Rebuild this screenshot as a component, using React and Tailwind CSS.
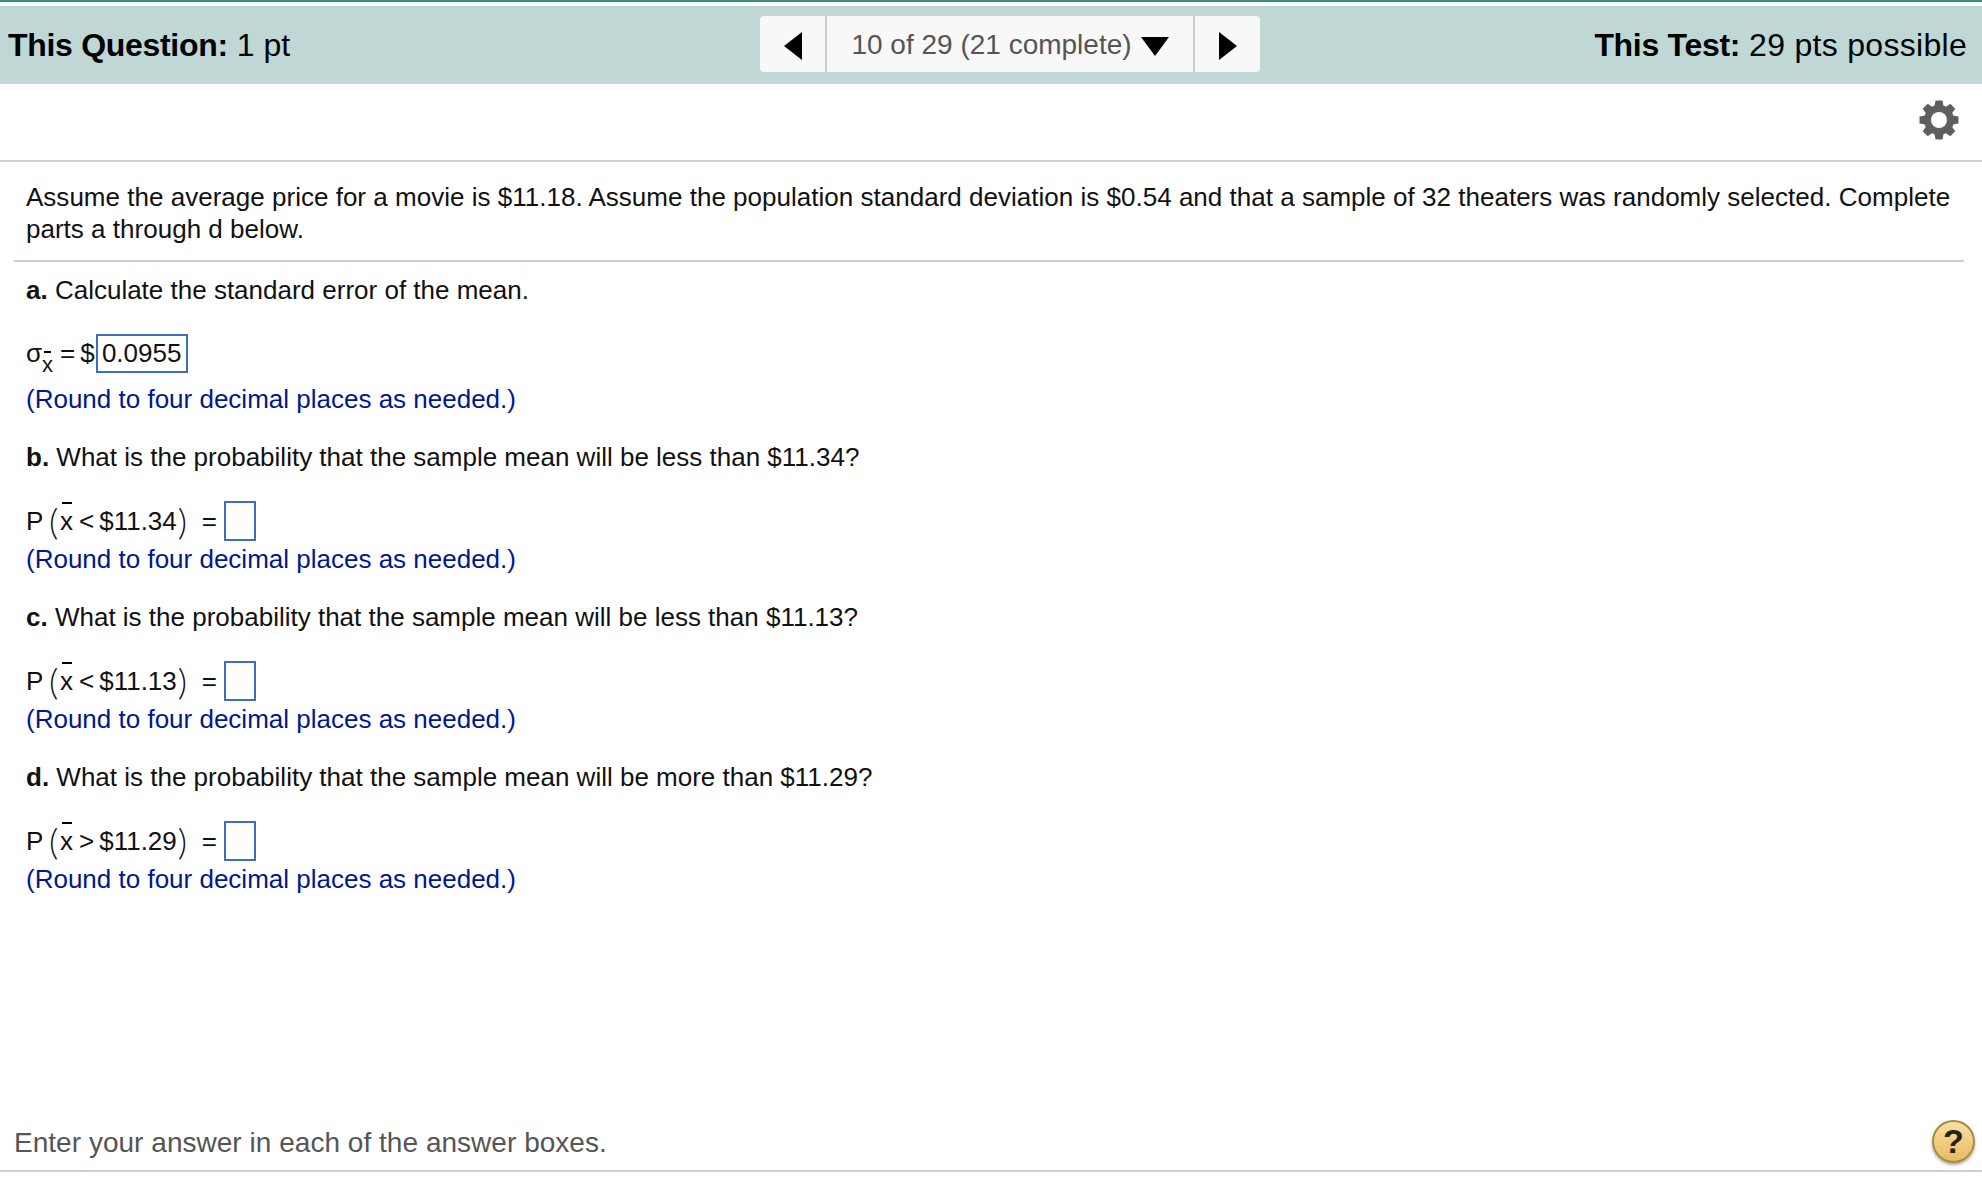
import React from "react";

const rows = [
  { label: "b.", q: "What is the probability that the sample mean will be less than $11.34?", op: "<", val: "$11.34" },
  { label: "c.", q: "What is the probability that the sample mean will be less than $11.13?", op: "<", val: "$11.13" },
  { label: "d.", q: "What is the probability that the sample mean will be more than $11.29?", op: ">", val: "$11.29" },
];

const RoundNote = ({ className = "" }) => (
  <div className={`leading-[32px] text-[#00188f] ${className}`}>(Round to four decimal places as needed.)</div>
);

const Gear = () => (
  <svg viewBox="0 0 40 40" className="h-[40px] w-[40px]">
    <g fill="#5f5f5f">
      {[0, 45, 90, 135, 180, 225, 270, 315].map((a) => (
        <path key={a} d="M15.5 6 L16.5 0.5 H23.5 L24.5 6 Z" transform={`rotate(${a} 20 20)`} />
      ))}
      <circle cx="20" cy="20" r="15" />
    </g>
    <circle cx="20" cy="20" r="8" fill="#fff" />
  </svg>
);

function ProbRow({ op, val }) {
  return (
    <div className="mt-[28px] flex h-[40px] items-center">
      <span className="w-[17px]">P</span>
      <span className="ml-[6px] w-[11px] font-['Lato',sans-serif] text-[36px] font-light leading-none">(</span>
      <span className="relative w-[13px]">
        x
        <span className="absolute left-[2px] top-0 h-[2px] w-[10px] bg-black" />
      </span>
      <span className="ml-[6px]">{op}</span>
      <span className="ml-[5px]">{val}</span>
      <span className="ml-[1px] w-[11px] font-['Lato',sans-serif] text-[36px] font-light leading-none">)</span>
      <span className="ml-[13px]">=</span>
      <span className="ml-[7px] h-[40px] w-[32px] border-2 border-[#3f6cc4]" />
    </div>
  );
}

export default function App() {
  return (
    <div className="flex h-[1180px] flex-col overflow-hidden bg-white font-['Liberation_Sans',Arial,sans-serif] text-[26px] text-[#111]">
      <div className="h-[2px] bg-[#3f8c80]" />
      <div className="h-[4px] bg-white" />

      <div className="grid h-[78px] grid-cols-[752px_500px_1fr] items-center border-b-2 border-[#cdd1dc] bg-[#bfd8d5] pl-[8px] pr-[15px] text-[32px] text-black">
        <div className="pt-px">
          <b className="tracking-[-0.3px]">This Question:</b> 1 pt
        </div>
        <div className="flex h-[56px] items-center rounded-[4px] bg-[#f8f8f8] text-[#555]">
          <div className="flex h-full w-[67px] items-center justify-center border-r-2 border-[#ccc] pt-[3px]">
            <span className="h-0 w-0 border-y-[14px] border-r-[18px] border-y-transparent border-r-black" />
          </div>
          <div className="flex h-full flex-1 items-center justify-center gap-[9px] whitespace-nowrap pt-[2px] text-[28px]">
            10 of 29 (21 complete)
            <span className="mt-[2px] h-0 w-0 border-x-[14px] border-t-[19px] border-x-transparent border-t-black" />
          </div>
          <div className="flex h-full w-[67px] items-center justify-center border-l-2 border-[#ccc] pt-[3px]">
            <span className="h-0 w-0 border-y-[14px] border-l-[18px] border-y-transparent border-l-black" />
          </div>
        </div>
        <div className="pt-px text-right">
          <b className="tracking-[-0.3px]">This Test:</b> <span className="tracking-[0.3px]">29 pts possible</span>
        </div>
      </div>

      <div className="flex h-[78px] items-center justify-end border-b-2 border-[#cdd1dc] pb-[4px] pr-[23px]">
        <Gear />
      </div>

      <div className="pl-[14px] pr-[18px]">
        <div className="border-b-2 border-[#cdd1dc] px-[12px] pb-[15px] pt-[19px] leading-[32px] tracking-[0.015px]">
          Assume the average price for a movie is $11.18. Assume the population standard deviation is $0.54 and that a
          sample of 32 theaters was randomly selected. Complete parts a through d below.
        </div>

        <div className="px-[12px]">
          <div className="mt-[12px] leading-[32px]">
            <b>a.</b> Calculate the standard error of the mean.
          </div>

          <div className="mt-[28px] flex h-[39px] items-center">
            <span className="relative w-[34px]">
              σ
              <span className="absolute left-[16px] top-[18px] text-[22px] leading-[26px]">x</span>
              <span className="absolute left-[18px] top-[17px] h-[2px] w-[7px] bg-black" />
            </span>
            <span>=</span>
            <span className="ml-[5px]">$</span>
            <span className="ml-px flex h-[39px] w-[92px] items-center justify-center border-2 border-[#3f6cc4]">
              0.0955
            </span>
          </div>
          <RoundNote className="mt-[10px]" />

          {rows.map((r) => (
            <div key={r.label}>
              <div className="mt-[26px] leading-[32px]">
                <b>{r.label}</b> {r.q}
              </div>
              <ProbRow op={r.op} val={r.val} />
              <RoundNote className="mt-[2px]" />
            </div>
          ))}
        </div>
      </div>

      <div className="mt-auto flex h-[60px] items-center justify-between border-b-2 border-[#cdd1dc] pl-[14px] pr-[7px] text-[28px] tracking-[0.03px] text-[#555]">
        <span className="pt-[3px]">Enter your answer in each of the answer boxes.</span>
        <span className="flex h-[43px] w-[43px] items-center justify-center rounded-full border-2 border-[#ab8a45] bg-linear-to-b from-[#f8df9f] to-[#e9bb60] text-[34px] font-bold text-[#222] shadow-[0_2px_3px_rgba(0,0,0,0.35)]">
          ?
        </span>
      </div>
      <div className="h-[8px]" />
    </div>
  );
}
